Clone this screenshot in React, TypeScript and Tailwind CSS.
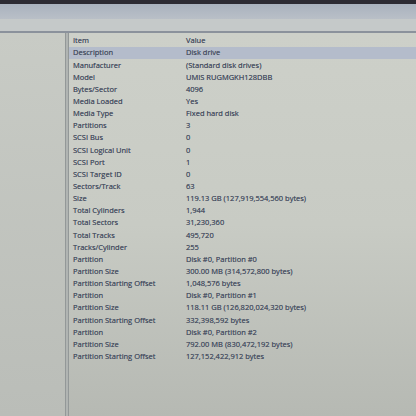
const rows: [string, string][] = [
  ['Description', 'Disk drive'],
  ['Manufacturer', '(Standard disk drives)'],
  ['Model', 'UMIS RUGMGKH128DBB'],
  ['Bytes/Sector', '4096'],
  ['Media Loaded', 'Yes'],
  ['Media Type', 'Fixed hard disk'],
  ['Partitions', '3'],
  ['SCSI Bus', '0'],
  ['SCSI Logical Unit', '0'],
  ['SCSI Port', '1'],
  ['SCSI Target ID', '0'],
  ['Sectors/Track', '63'],
  ['Size', '119.13 GB (127,919,554,560 bytes)'],
  ['Total Cylinders', '1,944'],
  ['Total Sectors', '31,230,360'],
  ['Total Tracks', '495,720'],
  ['Tracks/Cylinder', '255'],
  ['Partition', 'Disk #0, Partition #0'],
  ['Partition Size', '300.00 MB (314,572,800 bytes)'],
  ['Partition Starting Offset', '1,048,576 bytes'],
  ['Partition', 'Disk #0, Partition #1'],
  ['Partition Size', '118.11 GB (126,820,024,320 bytes)'],
  ['Partition Starting Offset', '332,398,592 bytes'],
  ['Partition', 'Disk #0, Partition #2'],
  ['Partition Size', '792.00 MB (830,472,192 bytes)'],
  ['Partition Starting Offset', '127,152,422,912 bytes'],
];

export default function App() {
  return (
    <div
      className="w-[416px] h-[416px] overflow-hidden flex flex-col bg-[#c4c7c2] text-[#464e60]"
      style={{ fontFamily: '"Open Sans", "Noto Sans", sans-serif' }}
    >
      {/* top edge of window */}
      <div className="h-[4px] bg-[#2c2b33]" />
      <div className="h-[15px] bg-gradient-to-b from-[#a9b2be] to-[#b9bfc7]" />
      <div className="h-[12px] bg-[#c5c9c9]" />
      <div className="h-[2px] bg-[#8b929c]" />

      <div className="flex flex-1">
        {/* left tree pane */}
        <div className="w-[65px] bg-gradient-to-b from-[#c8cbc5] to-[#babdb8]" />
        <div className="w-[4px] bg-[#b0b4b2] border-x border-[#939898]" />

        {/* right details pane */}
        <div className="flex-1 bg-gradient-to-b from-[#cdd0c9] via-[#c8cbc4] to-[#b6b9b3] pt-[2px] text-[7.5px] leading-none [text-shadow:0_0_0.5px_#5a6274]">
          <div className="flex h-[12.15px] items-center">
            <div className="w-[114px] pl-[4px]">Item</div>
            <div className="pl-[3px]">Value</div>
          </div>
          {rows.map(([k, v], i) => (
            <div
              key={i}
              className={`flex h-[12.15px] items-center ${i === 0 ? 'bg-[#b4bccb]' : ''}`}
            >
              <div className="w-[114px] pl-[4px] whitespace-nowrap">{k}</div>
              <div className="pl-[3px] whitespace-nowrap">{v}</div>
            </div>
          ))}
        </div>
      </div>
    </div>
  );
}
